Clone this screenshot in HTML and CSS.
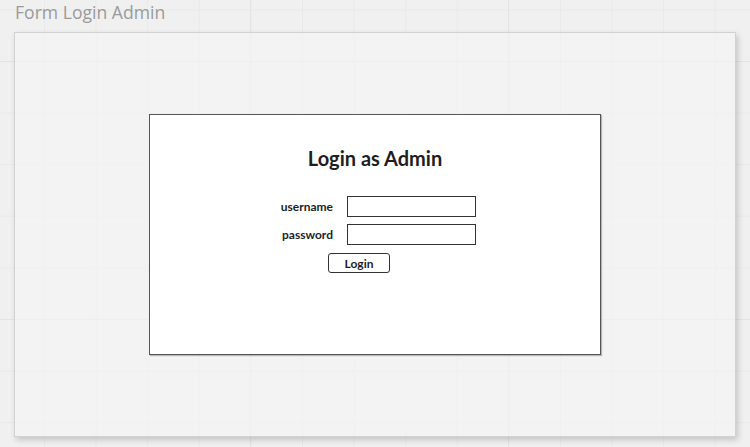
FILE: index.html
```html
<!DOCTYPE html>
<html>
<head>
<meta charset="utf-8">
<link rel="stylesheet" href="styles.css">
</head>
<body>
<div class="page-title">Form Login Admin</div>
<div class="panel">
  <div class="login-box">
    <h1 class="login-title">Login as Admin</h1>
    <div class="form">
      <label class="label">username</label>
      <div class="input"></div>
      <label class="label">password</label>
      <div class="input"></div>
      <div class="button-row"><span class="button">Login</span></div>
    </div>
  </div>
</div>
</body>
</html>
```
FILE: styles.css
```css
html, body {
  margin: 0;
  padding: 0;
  width: 750px;
  height: 447px;
  overflow: hidden;
}
body {
  background-color: #f0f0f0;
  background-image:
    linear-gradient(to right, #e4e4e4 1px, transparent 1px),
    linear-gradient(to bottom, #e4e4e4 1px, transparent 1px),
    linear-gradient(to right, #e9e9e9 1px, transparent 1px),
    linear-gradient(to bottom, #e9e9e9 1px, transparent 1px);
  background-size: 258px 258px, 258px 258px, 51.6px 51.6px, 51.6px 51.6px;
  background-position: 250px 0, 0 61px, 44px 0, 0 9.4px;
  font-family: "Lato", "Liberation Sans", sans-serif;
}
.page-title {
  font-family: "Open Sans", "Liberation Sans", sans-serif;
  font-size: 17.6px;
  line-height: 24px;
  color: #9a9a9a;
  padding-left: 15px;
  height: 32px;
  box-sizing: border-box;
}
.panel {
  margin-left: 14px;
  width: 722px;
  height: 405px;
  box-sizing: border-box;
  border: 1px solid #d2d2d2;
  background: rgba(246, 246, 246, 0.55);
  box-shadow: 2px 3px 6px rgba(0, 0, 0, 0.18);
  padding: 81px 0 0 134px;
}
.login-box {
  width: 452px;
  height: 241px;
  box-sizing: border-box;
  border: 1px solid #555;
  background: #fff;
  box-shadow: 1px 1px 1px rgba(0, 0, 0, 0.25);
  display: flex;
  flex-direction: column;
  align-items: flex-start;
}
.login-title {
  align-self: stretch;
  text-align: center;
  margin: 31px 0 0 0;
  font-size: 20px;
  line-height: 24px;
  font-weight: 700;
  color: #1e1e1e;
}
.form {
  margin: 26px 0 0 110px;
  display: grid;
  grid-template-columns: 73px 129px;
  column-gap: 14px;
  row-gap: 7px;
  align-items: center;
}
.label {
  text-align: right;
  font-size: 12px;
  font-weight: 700;
  color: #1e1e1e;
}
.input {
  height: 21px;
  box-sizing: border-box;
  border: 1px solid #333;
  background: #fff;
}
.button-row {
  grid-column: 1 / 3;
  padding-left: 68px;
  margin-top: 1px;
}
.button {
  display: flex;
  align-items: center;
  justify-content: center;
  width: 62px;
  height: 20px;
  box-sizing: border-box;
  border: 1px solid #333;
  border-radius: 3px;
  font-size: 12px;
  font-weight: 700;
  color: #1e1e1e;
}
```
